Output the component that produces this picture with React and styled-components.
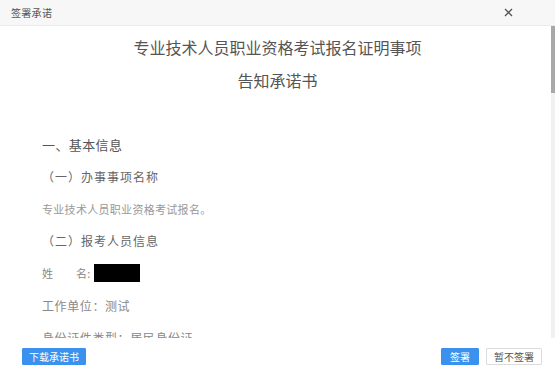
import React from "react"
import styled, { createGlobalStyle } from "styled-components"

const GlobalStyle = createGlobalStyle`
  html, body {
    margin: 0;
    padding: 0;
    background: #fff;
  }
  body {
    font-family: "Noto Sans CJK SC", "Noto Sans", sans-serif;
  }
  * {
    box-sizing: border-box;
  }
`

const App = () => {
  return (
    <>
      <GlobalStyle />
      <Dialog>
        <Header>
          <HeaderTitle>签署承诺</HeaderTitle>
          <CloseBtn type="button" aria-label="close">
            <svg width="9" height="9" viewBox="0 0 9 9">
              <path d="M1 1L8 8M8 1L1 8" stroke="#555" strokeWidth="1.3" />
            </svg>
          </CloseBtn>
        </Header>
        <BodyWrap>
          <Body>
            <DocTitle>
              <div>专业技术人员职业资格考试报名证明事项</div>
              <div>告知承诺书</div>
            </DocTitle>
            <Section>一、基本信息</Section>
            <SubHead>（一）办事事项名称</SubHead>
            <Text>专业技术人员职业资格考试报名。</Text>
            <SubHead>（二）报考人员信息</SubHead>
            <NameRow>
              姓　　名:<Masked />
            </NameRow>
            <Info>工作单位：测试</Info>
            <Info>身份证件类型：居民身份证</Info>
          </Body>
          <ScrollTrack>
            <ScrollThumb />
          </ScrollTrack>
        </BodyWrap>
        <Footer>
          <Button primary pad={6}>下载承诺书</Button>
          <FooterRight>
            <Button primary pad={8}>签署</Button>
            <Button pad={7}>暂不签署</Button>
          </FooterRight>
        </Footer>
      </Dialog>
    </>
  )
}

const Dialog = styled.div`
  width: 555px;
  height: 378px;
  display: flex;
  flex-direction: column;
  background: #fff;
  overflow: hidden;
`

const Header = styled.div`
  flex: 0 0 26px;
  display: flex;
  align-items: center;
  justify-content: space-between;
  padding: 0 42px 0 11px;
  background: #f7f7f7;
  border-bottom: 1px solid #ebebeb;
`

const HeaderTitle = styled.span`
  font-size: 10px;
  color: #555;
  letter-spacing: 0.3px;
`

const CloseBtn = styled.button`
  padding: 0;
  border: none;
  background: transparent;
  display: flex;
  cursor: pointer;
`

const BodyWrap = styled.div`
  flex: 0 0 312px;
  display: flex;
  overflow: hidden;
`

const Body = styled.div`
  flex: 1;
  overflow: hidden;
  padding: 5px 0 0 42px;
`

const ScrollTrack = styled.div`
  flex: 0 0 4px;
  background: #f1f1f1;
  display: flex;
  flex-direction: column;
`

const ScrollThumb = styled.div`
  height: 67px;
  background: #a8a8a8;
`

const DocTitle = styled.div`
  margin-left: -38px;
  text-align: center;
  font-size: 16px;
  line-height: 33px;
  color: #555;
  margin-bottom: 32px;
`

const Section = styled.div`
  font-size: 13px;
  line-height: 32px;
  color: #555;
  letter-spacing: 0.4px;
`

const SubHead = styled.div`
  font-size: 12px;
  line-height: 32px;
  color: #666;
  letter-spacing: 1px;
`

const Text = styled.div`
  font-size: 11px;
  line-height: 32px;
  color: #999;
  letter-spacing: 0.3px;
`

const Info = styled.div`
  display: flex;
  align-items: center;
  height: 32px;
  font-size: 12px;
  color: #888;
  letter-spacing: 0.6px;
  white-space: pre;
`

const NameRow = styled(Info)`
  font-size: 11px;
  letter-spacing: 0.3px;
`

const Masked = styled.span`
  display: inline-block;
  width: 46px;
  height: 18px;
  background: #000;
  margin-left: 3px;
`

const Footer = styled.div`
  flex: 0 0 40px;
  display: flex;
  justify-content: space-between;
  align-items: flex-start;
  padding: 10px 13px 0 22px;
`

const FooterRight = styled.div`
  display: flex;
  gap: 7px;
`

const Button = styled.button`
  height: 17px;
  padding: 0 ${props => props.pad}px;
  font-family: inherit;
  font-size: 10px;
  line-height: 15px;
  border-radius: 1px;
  cursor: pointer;
  color: ${props => (props.primary ? "#fff" : "#555")};
  background: ${props => (props.primary ? "#3a92ee" : "#fff")};
  border: 1px solid ${props => (props.primary ? "#3a92ee" : "#dcdcdc")};
`

export default App
